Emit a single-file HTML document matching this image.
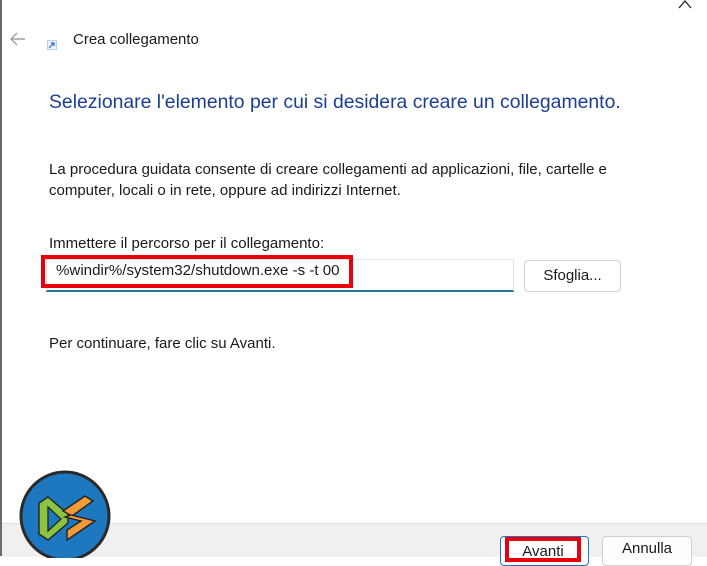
<!DOCTYPE html>
<html><head><style>
body{margin:0;width:707px;height:556px;position:relative;overflow:hidden;background:#fff;font-family:"Segoe UI","Liberation Sans",sans-serif;color:#1a1a1a}
.a{position:absolute;white-space:nowrap}
</style></head><body>
<div class="a" style="left:0;top:0;width:2px;height:556px;background:#6b6b6b"></div>
<svg class="a" style="left:676px;top:0" width="20" height="10"><path d="M3 8 L9 1 L15 8" stroke="#222" fill="none" stroke-width="1.3"/></svg>
<svg class="a" style="left:9px;top:32px" width="18" height="14"><path d="M16 7H2 M8 1 L2 7 L8 13" stroke="#a0a0a0" fill="none" stroke-width="1.4"/></svg>
<div class="a" style="left:47px;top:40px;width:8px;height:8px;background:#eaf2fb;border:1px solid #b8d0ea"></div>
<svg class="a" style="left:48px;top:41px" width="8" height="8"><path d="M1 7L6 2M3 2H6V5" stroke="#2a6fc0" fill="none" stroke-width="1.2"/></svg>
<div class="a" style="left:73px;top:31px;font-size:15px">Crea collegamento</div>
<div class="a" style="left:49px;top:91px;font-size:19.4px;color:#1b3f95">Selezionare l'elemento per cui si desidera creare un collegamento.</div>
<div class="a" style="left:49px;top:159px;font-size:15px;line-height:21px">La procedura guidata consente di creare collegamenti ad applicazioni, file, cartelle e<br>computer, locali o in rete, oppure ad indirizzi Internet.</div>
<div class="a" style="left:49px;top:235px;font-size:15px">Immettere il percorso per il collegamento:</div>
<div class="a" style="left:46px;top:259px;width:468px;height:33px;border:1px solid #e2e2e2;border-bottom:2px solid #2a6f99;box-sizing:border-box"></div>
<div class="a" style="left:41px;top:255px;width:312px;height:33px;border:4px solid #e8000b;box-sizing:border-box"></div>
<div class="a" style="left:56px;top:262px;font-size:15.1px">%windir%/system32/shutdown.exe -s -t 00</div>
<div class="a" style="left:524px;top:260px;width:97px;height:32px;border:1px solid #d0d0d0;border-radius:4px;box-sizing:border-box;font-size:15px;text-align:center;line-height:30px">Sfoglia...</div>
<div class="a" style="left:49px;top:335px;font-size:15px">Per continuare, fare clic su Avanti.</div>
<div class="a" style="left:2px;top:523px;width:705px;height:33px;background:#f0f0f0;border-top:1px solid #e0e0e0"></div>
<div class="a" style="left:500px;top:536px;width:89px;height:30px;border:1px solid #2a6fc0;border-radius:4px;background:#fff;box-sizing:border-box"></div>
<div class="a" style="left:505px;top:537px;width:76px;height:25px;border:4px solid #e8000b;box-sizing:border-box;font-size:15px;text-align:center;line-height:22px">Avanti</div>
<div class="a" style="left:602px;top:536px;width:90px;height:30px;border:1px solid #d0d0d0;border-radius:4px;background:#fdfdfd;box-sizing:border-box;font-size:15px;text-align:center;line-height:24px">Annulla</div>
<svg class="a" style="left:15px;top:466px" width="100" height="92">
<ellipse cx="50" cy="50" rx="44" ry="44" fill="#1e78c0" stroke="#2a2a2a" stroke-width="3"/>
<path d="M24 37 L33 31 L53 48 L53 57 L33 74 L24 68Z" fill="#8bc53f" stroke="#222" stroke-width="1.4"/>
<path d="M33 41 L33 65 L46 53Z" fill="#1e78c0" stroke="#222" stroke-width="1.3"/>
<path d="M48 45 L70 30 L78 35 L57 50Z" fill="#f19a38" stroke="#222" stroke-width="1.4"/>
<path d="M56 49 L80 55 L52 74 L52 64 L66 55 L50 51Z" fill="#f19a38" stroke="#222" stroke-width="1.4"/>
</svg>
</body></html>
